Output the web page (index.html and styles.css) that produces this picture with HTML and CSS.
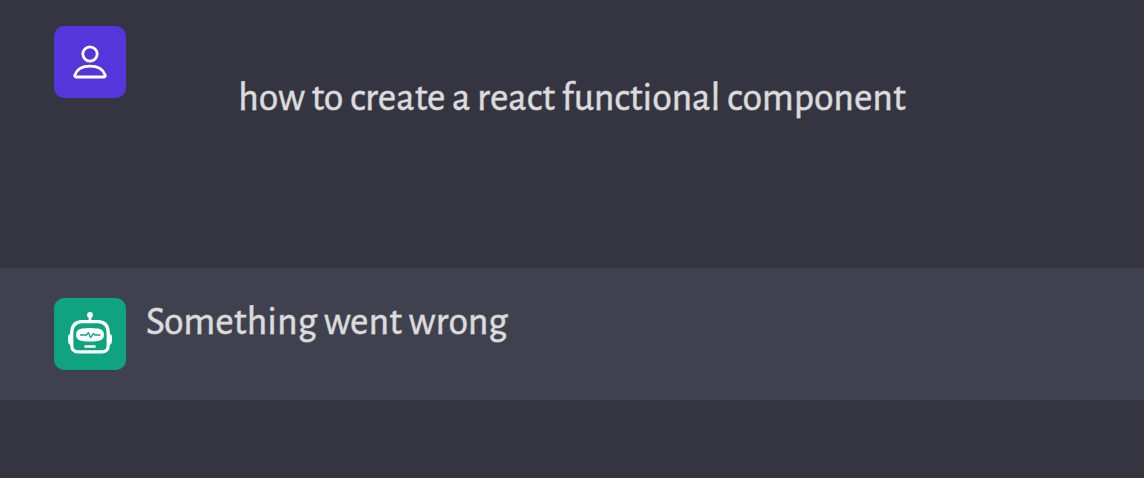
FILE: index.html
```html
<!DOCTYPE html>
<html lang="en">
<head>
<meta charset="utf-8">
<meta name="viewport" content="width=device-width, initial-scale=1">
<title>Chat</title>
<link rel="stylesheet" href="styles.css">
</head>
<body>
<main class="chat">
  <article class="message message-user">
    <div class="avatar avatar-user">
      <svg viewBox="0 0 72 72" role="img" aria-label="User" fill="none" stroke="#fff" stroke-width="2.8" stroke-linejoin="round">
        <circle cx="36" cy="28" r="7.2"/>
        <path d="M22 51H50Q51.6 51 51.2 49.2C49.2 43.2 43 40.2 36 40.2S22.8 43.2 20.8 49.2Q20.4 51 22 51Z"/>
      </svg>
    </div>
    <p class="text">how to create a react functional component</p>
  </article>
  <article class="message message-bot">
    <div class="avatar avatar-bot">
      <svg viewBox="0 0 72 72" role="img" aria-label="Bot" fill="none" stroke-linecap="round" stroke-linejoin="round">
        <circle cx="36" cy="17" r="2.9" fill="#fff"/>
        <path d="M36 18V24" stroke="#fff" stroke-width="2.6"/>
        <path d="M18 34H16.6L16 36Q14 36.5 14 39V43Q14 46 16.6 47H18ZM54 34H55.4L56 36Q58 36.5 58 39V43Q58 46 55.4 47H54Z" fill="#fff"/>
        <path d="M27 23.6H45Q54.2 24.6 54.2 35V47.5Q54.2 53.8 48 53.8H24Q17.8 53.8 17.8 47.5V35Q17.8 24.6 27 23.6Z" stroke="#fff" stroke-width="3.2"/>
        <path d="M28 30.4Q36 29.4 44 30.4Q50 31.2 50 36.7T44 43Q36 44 28 43Q22 42.2 22 36.7T28 30.4Z" fill="#fff"/>
        <path d="M26.5 37H32.5L34.3 34.6L36.6 39.6L39.4 35.6L41 37H46" stroke="#0fa47f" stroke-width="1.3"/>
        <path d="M31.5 48.5H40.5" stroke="#fff" stroke-width="2.6"/>
      </svg>
    </div>
    <p class="text">Something went wrong</p>
  </article>
</main>
</body>
</html>
```
FILE: styles.css
```css
body {
  margin: 0;
  background: #343541;
  color: #dcdcdc;
  font-family: "Alegreya Sans", Lato, sans-serif;
}

.message {
  display: flex;
  align-items: flex-start;
  gap: 20px;
  padding: 30px 54px;
}

.message-user {
  padding-top: 26px;
  padding-bottom: 146px;
}

.message-bot {
  background: #40414f;
}

.avatar {
  flex: none;
  width: 72px;
  height: 72px;
  border-radius: 10px;
}

.avatar svg {
  display: block;
}

.avatar-user {
  background: #5436da;
}

.avatar-bot {
  background: #0fa47f;
}

.text {
  margin: 0;
  font-size: 40px;
  line-height: 48px;
  -webkit-text-stroke: 1px rgba(220, 220, 220, 0.6);
}

.message-user .text {
  padding: 48px 0 0 92px;
}
```
